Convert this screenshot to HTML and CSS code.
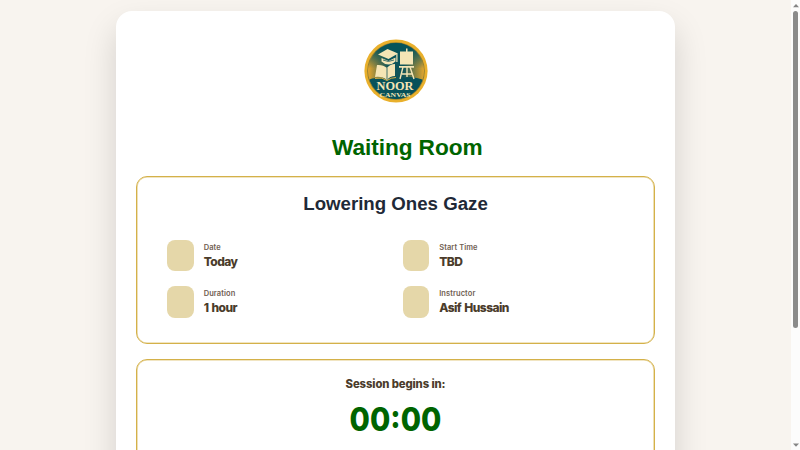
FILE: index.html
```html
<!DOCTYPE html>
<html lang="en">
<head>
<meta charset="utf-8">
<title>Waiting Room</title>
<link rel="stylesheet" href="styles.css">
</head>
<body>
<main class="page">
  <section class="shell">
    <svg class="logo" viewBox="0 0 64 64" role="img" aria-label="Noor Canvas">
      <defs>
        <linearGradient id="side" x1="0" x2="1">
          <stop offset=".05" stop-color="#efaa2c"/>
          <stop offset=".38" stop-color="#105459"/>
          <stop offset=".62" stop-color="#105459"/>
          <stop offset=".96" stop-color="#f0ab2c"/>
        </linearGradient>
        <linearGradient id="sky" x1="0" y1="0" x2="0" y2="1">
          <stop offset=".15" stop-color="#07545a"/>
          <stop offset=".46" stop-color="#07545a" stop-opacity="0"/>
        </linearGradient>
        <clipPath id="disc"><circle cx="32" cy="32" r="28"/></clipPath>
      </defs>
      <circle cx="32" cy="32" r="31.600" fill="#e9b02c"/>
      <circle cx="32" cy="32" r="28.800" fill="#8b7b32"/>
      <g clip-path="url(#disc)">
        <path fill="url(#side)" d="M0 0h64v64H0z"/>
        <path fill="url(#sky)" d="M0 0h64v64H0z"/>
        <path fill="#08515a" d="M0 43q10-6 17-3 9-1 15 2 8-4 15-4 10 1 17 5v21H0z"/>
      </g>
      <g fill="#f5e5b5">
        <path d="m14 15.500 9.500-5.500 10.500 4.500-9.500 5.500z"/>
        <path d="m17.500 19 7 3 7-3.500v4q-3 3-7 3t-7-3z"/>
        <path d="M32.300 15h1.200v8h-1.200z"/>
        <path d="M13 26q6-.5 10 3 3-4 8-4v12q-5 0-8 4-5-4-12-3z"/>
        <path d="M36 12.500h13v13H36zM42 9.500h1.500V13H42zM35 27h15v1.800H35z"/>
      </g>
      <path d="m39 28-3 12m10-12 4 12m-7-12v10m-5-3h11" fill="none" stroke="#f5e5b5" stroke-width="1.400"/>
      <path d="M23 29v11M19 21q5 3 11 0" fill="none" stroke="#15565a" stroke-width=".8"/>
      <path d="M11 39.500q7-2 12 2 4-3 9-3" fill="none" stroke="#e9b744" stroke-width=".9"/>
      <text class="logo-name" x="31" y="50.500" textLength="37" lengthAdjust="spacingAndGlyphs">NOOR</text>
      <text class="logo-sub" x="31" y="58.200" textLength="31" lengthAdjust="spacingAndGlyphs">CANVAS</text>
    </svg>
    <h1 class="title">Waiting Room</h1>
    <section class="panel details">
      <h2 class="topic">Lowering Ones Gaze</h2>
      <div class="facts">
        <div class="fact"><span class="tile"></span><div><div class="label">Date</div><div class="value">Today</div></div></div>
        <div class="fact"><span class="tile"></span><div><div class="label">Start Time</div><div class="value">TBD</div></div></div>
        <div class="fact"><span class="tile"></span><div><div class="label">Duration</div><div class="value">1 hour</div></div></div>
        <div class="fact"><span class="tile"></span><div><div class="label">Instructor</div><div class="value">Asif Hussain</div></div></div>
      </div>
    </section>
    <section class="panel countdown">
      <div class="begins">Session begins in:</div>
      <div class="timer">00:00</div>
    </section>
  </section>
</main>
<aside class="scrollbar" aria-hidden="true">
  <svg class="arrow" viewBox="0 0 6 4"><path d="M3 0 6 3.200H0z"/></svg>
  <span class="thumb"></span>
  <svg class="arrow arrow-down" viewBox="0 0 6 4"><path d="M0 .5h6L3 3.700z"/></svg>
</aside>
</body>
</html>
```
FILE: styles.css
```css
* { box-sizing: border-box; }

body {
  margin: 0;
  height: 450px;
  overflow: hidden;
  display: flex;
  background: #f8f4ef;
  font-family: Inter, "Liberation Sans", sans-serif;
}

.page {
  flex: 1;
  height: 450px;
  overflow: hidden;
  padding-top: 10.700px;
  display: flex;
  justify-content: center;
  align-items: flex-start;
}

.shell {
  width: 559px;
  height: 620px;
  padding: 28.500px 20px 0;
  display: flex;
  flex-direction: column;
  background: #fff;
  border-radius: 16px;
  box-shadow: 0 16.700px 33.300px rgba(0, 0, 0, .15);
}

.logo {
  width: 64px;
  height: 64px;
  align-self: center;
  flex: none;
}

.logo-name,
.logo-sub {
  fill: #f5e5b5;
  font-family: "Liberation Serif", serif;
  text-anchor: middle;
}

.logo-name { font-size: 12.500px; font-weight: 700; }
.logo-sub { font-size: 6.800px; font-weight: 700; }

.title {
  margin: 29.800px 0 0;
  padding-left: 23.500px;
  height: 28px;
  font: 700 22.670px/28px "Liberation Sans", Arial, sans-serif;
  letter-spacing: -.08px;
  color: #006400;
  text-align: center;
}

.panel {
  flex: none;
  border: 1px solid #d4b149;
  border-radius: 11px;
  box-shadow: inset 0 0 0 .6px #e3cb86;
  text-align: center;
}

.details {
  height: 167.500px;
  margin-top: 15.200px;
  padding: 13.500px 30px 0;
}

.topic {
  margin: 0;
  font: 700 18.670px/26px "Liberation Sans", Arial, sans-serif;
  color: #1f2937;
}

.facts {
  margin-top: 23.300px;
  display: grid;
  grid-template-columns: 1fr 1fr;
  column-gap: 14px;
  row-gap: 15px;
}

.fact {
  height: 31.300px;
  display: flex;
  align-items: center;
  gap: 10px;
  text-align: left;
}

.tile {
  width: 26.700px;
  height: 31.300px;
  border-radius: 8px;
  background: #e5d7a9;
}

.label {
  padding-top: 1px;
  font-size: 7.500px;
  line-height: 12px;
  font-weight: 600;
  letter-spacing: .08px;
  color: #706052;
}

.value {
  font-size: 12px;
  line-height: 16px;
  font-weight: 800;
  letter-spacing: -.55px;
  word-spacing: 1px;
  color: #4b3c2b;
}

.countdown {
  height: 200px;
  margin-top: 15.300px;
  padding-top: 15.800px;
}

.begins {
  font-size: 11.300px;
  line-height: 17px;
  font-weight: 800;
  letter-spacing: -.12px;
  color: #4b3c2b;
}

.timer {
  margin-top: 8.500px;
  font-size: 32.500px;
  line-height: 38px;
  font-weight: 800;
  transform: scaleX(.905);
  color: #006400;
}

.scrollbar {
  width: 9px;
  height: 450px;
  padding: 4px 0 3px;
  display: flex;
  flex-direction: column;
  align-items: center;
  background: #fcfcfc;
}

.arrow { width: 6px; height: 4px; flex: none; fill: #858585; }
.arrow-down { margin-top: auto; }

.thumb {
  width: 5.500px;
  height: 317px;
  margin-top: 3px;
  border-radius: 3px;
  background: #8b8b8b;
}
```
